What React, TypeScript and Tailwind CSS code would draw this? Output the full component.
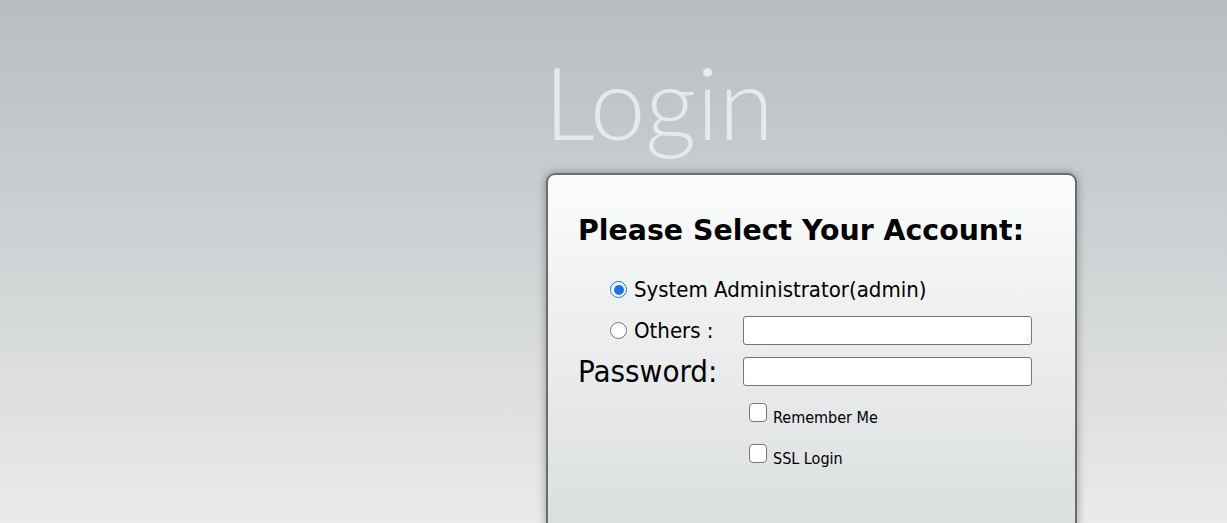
import { type FC } from 'react';

const tahoma = { fontFamily: '"DejaVu Sans Condensed", "DejaVu Sans", sans-serif' };

const Radio: FC<{ checked?: boolean }> = ({ checked }) =>
  checked ? (
    <span className="flex h-[17px] w-[17px] shrink-0 items-center justify-center rounded-full border-[1.5px] border-[#1a73e8] bg-white">
      <span className="h-[10px] w-[10px] rounded-full bg-[#1a73e8]" />
    </span>
  ) : (
    <span className="h-[17px] w-[17px] shrink-0 rounded-full border border-[#767676] bg-white" />
  );

const Checkbox: FC = () => (
  <span className="h-[19px] w-[18px] shrink-0 rounded-[4px] border border-[#767676] bg-white" />
);

const TextInput: FC = () => (
  <input
    type="text"
    className="h-[29px] w-[289px] rounded-[3px] border border-[#767676] bg-white px-1 outline-none"
  />
);

export default function App() {
  return (
    <div
      className="h-[523px] w-full overflow-hidden bg-gradient-to-b from-[#b8bdc0] to-[#eaebeb] pl-[546px]"
      style={tahoma}
    >
      <h1
        className="mt-[42px] h-[131px] -ml-[2px] text-[100px] leading-[118px] text-[#e8e9e9]"
        style={{ fontFamily: 'Lato, sans-serif', fontWeight: 300 }}
      >
        Login
      </h1>
      <div className="h-[380px] w-[531px] rounded-[9px] border-2 border-[#6b6d6e] bg-gradient-to-b from-[#fbfcfc] to-[#d9dcdd] pl-[30px] pt-[36px] shadow-[0_0_10px_rgba(0,0,0,0.35)]">
        <h2
          className="text-[28.4px] font-bold leading-[40px] text-black"
          style={{ fontFamily: '"DejaVu Sans", sans-serif' }}
        >
          Please Select Your Account:
        </h2>
        <div className="mt-[18px] flex flex-col text-black">
          <div className="flex h-[41px] items-center pl-[32px]">
            <Radio checked />
            <span className="ml-[7px] text-[22px] leading-none">System Administrator(admin)</span>
          </div>
          <div className="flex h-[41px] items-center">
            <div className="flex w-[165px] items-center pl-[32px]">
              <Radio />
              <span className="ml-[7px] text-[22px] leading-none">Others :</span>
            </div>
            <TextInput />
          </div>
          <div className="flex h-[41px] items-center">
            <span className="w-[165px] text-[31px] leading-none">Password:</span>
            <TextInput />
          </div>
          <div className="mt-[11px] flex items-start gap-[6px] pl-[171px]">
            <Checkbox />
            <span className="mt-[6px] text-[16px] leading-[18px]">Remember Me</span>
          </div>
          <div className="mt-[17px] flex items-start gap-[6px] pl-[171px]">
            <Checkbox />
            <span className="mt-[6px] text-[16px] leading-[18px]">SSL Login</span>
          </div>
        </div>
      </div>
    </div>
  );
}
